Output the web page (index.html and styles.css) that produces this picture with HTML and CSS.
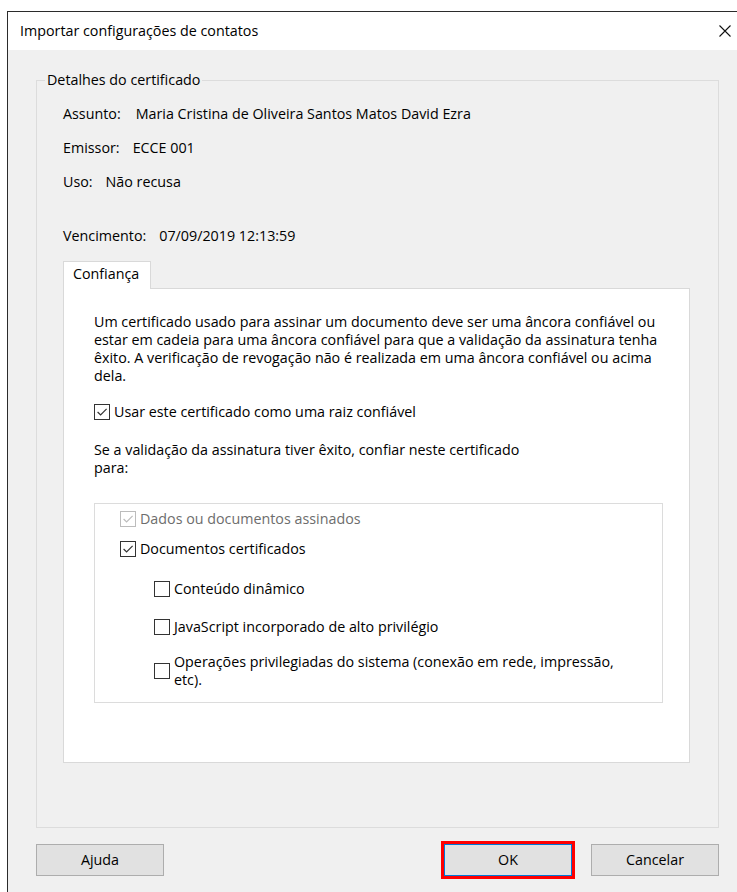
FILE: index.html
```html
<!DOCTYPE html>
<html lang="pt-BR">
<head>
<meta charset="utf-8">
<title>Importar configurações de contatos</title>
<link rel="stylesheet" href="styles.css">
</head>
<body>
<div class="window">
  <header class="titlebar">
    <span class="title">Importar configurações de contatos</span>
    <span class="close" aria-label="Fechar">
      <svg width="12" height="12" viewBox="0 0 12 12"><path d="M0.5 0.5 L11.5 11.5 M11.5 0.5 L0.5 11.5" stroke="#111" stroke-width="1.1" fill="none"/></svg>
    </span>
  </header>

  <div class="client">
    <fieldset class="group">
      <legend>Detalhes do certificado</legend>

      <div class="details">
        <div class="row"><span class="key">Assunto:</span><span class="val">Maria Cristina de Oliveira Santos Matos David Ezra</span></div>
        <div class="row"><span class="key">Emissor:</span><span class="val">ECCE 001</span></div>
        <div class="row"><span class="key">Uso:</span><span class="val">Não recusa</span></div>
        <div class="row expiry"><span class="key">Vencimento:</span><span class="val">07/09/2019 12:13:59</span></div>
      </div>

      <div class="tabs">
        <div class="tablist">
          <div class="tab active">Confiança</div>
        </div>
        <div class="panel">
          <p class="info">Um certificado usado para assinar um documento deve ser uma âncora confiável ou<br>estar em cadeia para uma âncora confiável para que a validação da assinatura tenha<br>êxito. A verificação de revogação não é realizada em uma âncora confiável ou acima<br>dela.</p>

          <label class="check root">
            <span class="box"><svg viewBox="0 0 14 14"><path d="M2.6 7 L5.6 10 L11.6 3.9" fill="none" stroke="#333" stroke-width="1.2"/></svg></span>
            <span>Usar este certificado como uma raiz confiável</span>
          </label>

          <p class="info trust">Se a validação da assinatura tiver êxito, confiar neste certificado<br>para:</p>

          <div class="perms">
            <label class="check disabled">
              <span class="box"><svg viewBox="0 0 14 14"><path d="M2.6 7 L5.6 10 L11.6 3.9" fill="none" stroke="#bcbcbc" stroke-width="1.2"/></svg></span>
              <span>Dados ou documentos assinados</span>
            </label>
            <label class="check certified">
              <span class="box"><svg viewBox="0 0 14 14"><path d="M2.6 7 L5.6 10 L11.6 3.9" fill="none" stroke="#333" stroke-width="1.2"/></svg></span>
              <span>Documentos certificados</span>
            </label>
            <label class="check sub dynamic">
              <span class="box"></span>
              <span>Conteúdo dinâmico</span>
            </label>
            <label class="check sub js">
              <span class="box"></span>
              <span>JavaScript incorporado de alto privilégio</span>
            </label>
            <label class="check sub ops">
              <span class="box"></span>
              <span>Operações privilegiadas do sistema (conexão em rede, impressão,<br>etc).</span>
            </label>
          </div>
        </div>
      </div>
    </fieldset>

    <div class="buttons">
      <button class="btn">Ajuda</button>
      <div class="right">
        <button class="btn default">OK</button>
        <button class="btn">Cancelar</button>
      </div>
    </div>
  </div>
</div>
</body>
</html>
```

FILE: styles.css
```css
* { box-sizing: border-box; }

html, body {
  margin: 0;
  height: 100%;
  background: #ffffff;
  overflow: hidden;
}

body {
  font-family: "Open Sans", "Noto Sans", sans-serif;
  font-size: 14.3px;
  line-height: 18px;
  color: #000;
}

.window {
  margin: 11px 0 0 7px;
  width: 760px;
  height: 900px;
  border-top: 1px solid #2b2b2b;
  border-left: 1px solid #2b2b2b;
  display: flex;
  flex-direction: column;
}

/* title bar */
.titlebar {
  height: 38px;
  background: #fff;
  display: flex;
  align-items: center;
  padding-left: 12px;
  flex: none;
}
.title { flex: 1; }
.close {
  width: 12px;
  height: 12px;
  margin-right: 36px;
  display: flex;
}

/* dialog client area */
.client {
  flex: 1;
  background: #f0f0f0;
  padding: 21px 0 0 28px;
}

.group {
  width: 683px;
  margin: 0;
  padding: 16px 26px 64px 26px;
  border: 1px solid #dcdcdc;
  min-width: 0;
}
.group legend {
  padding: 0 2px;
  margin-left: -18px;
  line-height: 18px;
}

.details .row {
  display: flex;
  gap: 13px;
  margin-bottom: 16px;
}
.details .row:first-child { gap: 15px; }
.details .row.expiry {
  margin-top: 36px;
  margin-bottom: 16px;
}

/* tab control */
.tablist { display: flex; }
.tab {
  width: 88px;
  height: 28px;
  padding: 3px 0 0 9px;
  border: 1px solid #d9d9d9;
  border-bottom: none;
  background: #fff;
  position: relative;
  z-index: 1;
  margin-bottom: -1px;
}
.panel {
  width: 627px;
  background: #fff;
  border: 1px solid #d9d9d9;
  padding: 24px 20px 59px 30px;
}

.info { margin: 0; }
.info.trust { margin-top: 20px; }

/* checkboxes */
.check {
  display: flex;
  align-items: center;
  gap: 4px;
}
.box {
  width: 16px;
  height: 16px;
  border: 1px solid #333;
  background: #fff;
  flex: none;
  display: flex;
}
.box svg { width: 14px; height: 14px; }

.check.root { margin-top: 18px; }

.check.disabled { color: #6d6d6d; }
.check.disabled .box { border-color: #bcbcbc; }

.perms {
  margin-top: 26px;
  width: 569px;
  border: 1px solid #dcdcdc;
  padding: 6px 0 13px 25px;
}
.check.certified { margin-top: 12px; }
.check.sub { margin-left: 34px; }
.check.dynamic { margin-top: 22px; }
.check.js { margin-top: 20px; }
.check.ops { margin-top: 17px; }

/* buttons row */
.buttons {
  width: 683px;
  margin-top: 16px;
  display: flex;
  justify-content: space-between;
}
.buttons .right {
  display: flex;
  gap: 19px;
}
.btn {
  width: 128px;
  height: 32px;
  font: inherit;
  color: #000;
  background: #e1e1e1;
  border: 1px solid #adadad;
  padding: 0;
}
.btn.default {
  border-color: #0078d7;
  outline: 3px solid #ff0000;
  outline-offset: 0;
}
```
